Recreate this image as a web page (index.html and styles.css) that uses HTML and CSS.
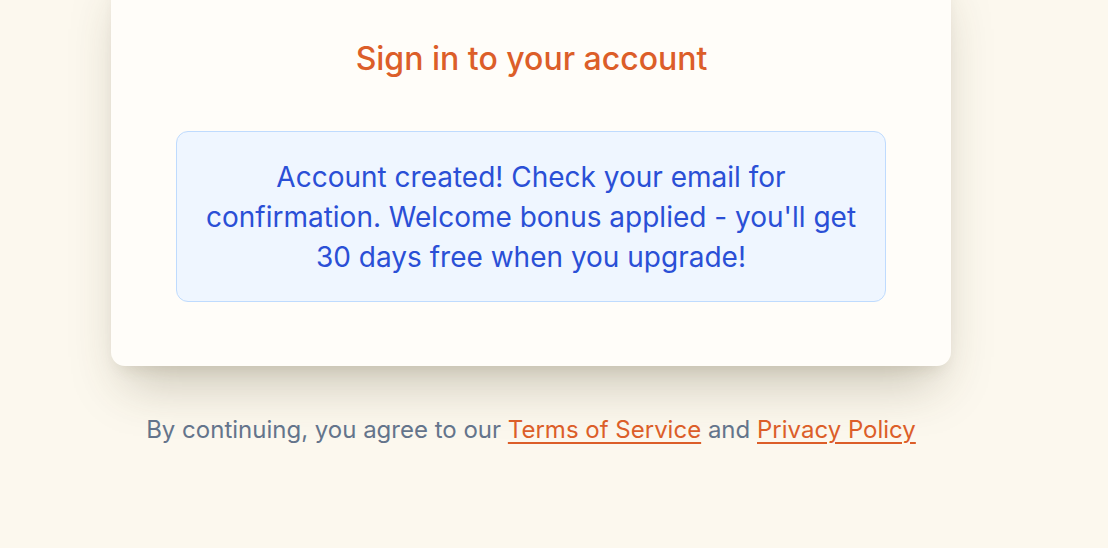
FILE: index.html
```html
<!DOCTYPE html>
<html lang="en">
<head>
<meta charset="utf-8">
<title>Sign in</title>
<link rel="stylesheet" href="styles.css">
</head>
<body>
<main class="page">
  <section class="card">
    <h1 class="title">Sign in to your account</h1>
    <div class="alert">Account created! Check your email for confirmation. Welcome bonus applied - you'll get 30 days free when you upgrade!</div>
  </section>
  <p class="legal">By continuing, you agree to our <a href="#" class="link">Terms of Service</a> and <a href="#" class="link">Privacy Policy</a></p>
</main>
</body>
</html>
```

FILE: styles.css
```css
html, body {
  margin: 0;
  padding: 0;
  background: #fcf8ee;
  font-family: Inter, "Noto Sans", sans-serif;
}
.page {
  width: 840px;
  margin-left: 111px;
  display: flex;
  flex-direction: column;
}
.card {
  margin-top: -40px;
  background: #fffdf9;
  border-radius: 14px;
  padding: 78px 64px 64px 65px;
  box-shadow: 0 30px 50px -14px rgba(70, 60, 30, 0.28), 0 10px 16px -8px rgba(70, 60, 30, 0.12);
  display: flex;
  flex-direction: column;
  gap: 51px;
}
.title {
  margin: 0;
  text-align: center;
  color: #dc5e29;
  font-size: 32px;
  font-weight: 500;
  line-height: 42px;
}
.alert {
  width: 660px;
  padding: 25px 24px 24px;
  border: 1px solid #bfdbfe;
  border-radius: 12px;
  background: #eff6ff;
  color: #2a4fd6;
  font-size: 28px;
  line-height: 40px;
  text-align: center;
}
.legal {
  margin: 48px 0 0;
  text-align: center;
  color: #64748b;
  font-size: 24px;
  line-height: 32px;
}
.link {
  color: #dc5e29;
  text-decoration: underline;
  text-underline-offset: 4px;
}
```
